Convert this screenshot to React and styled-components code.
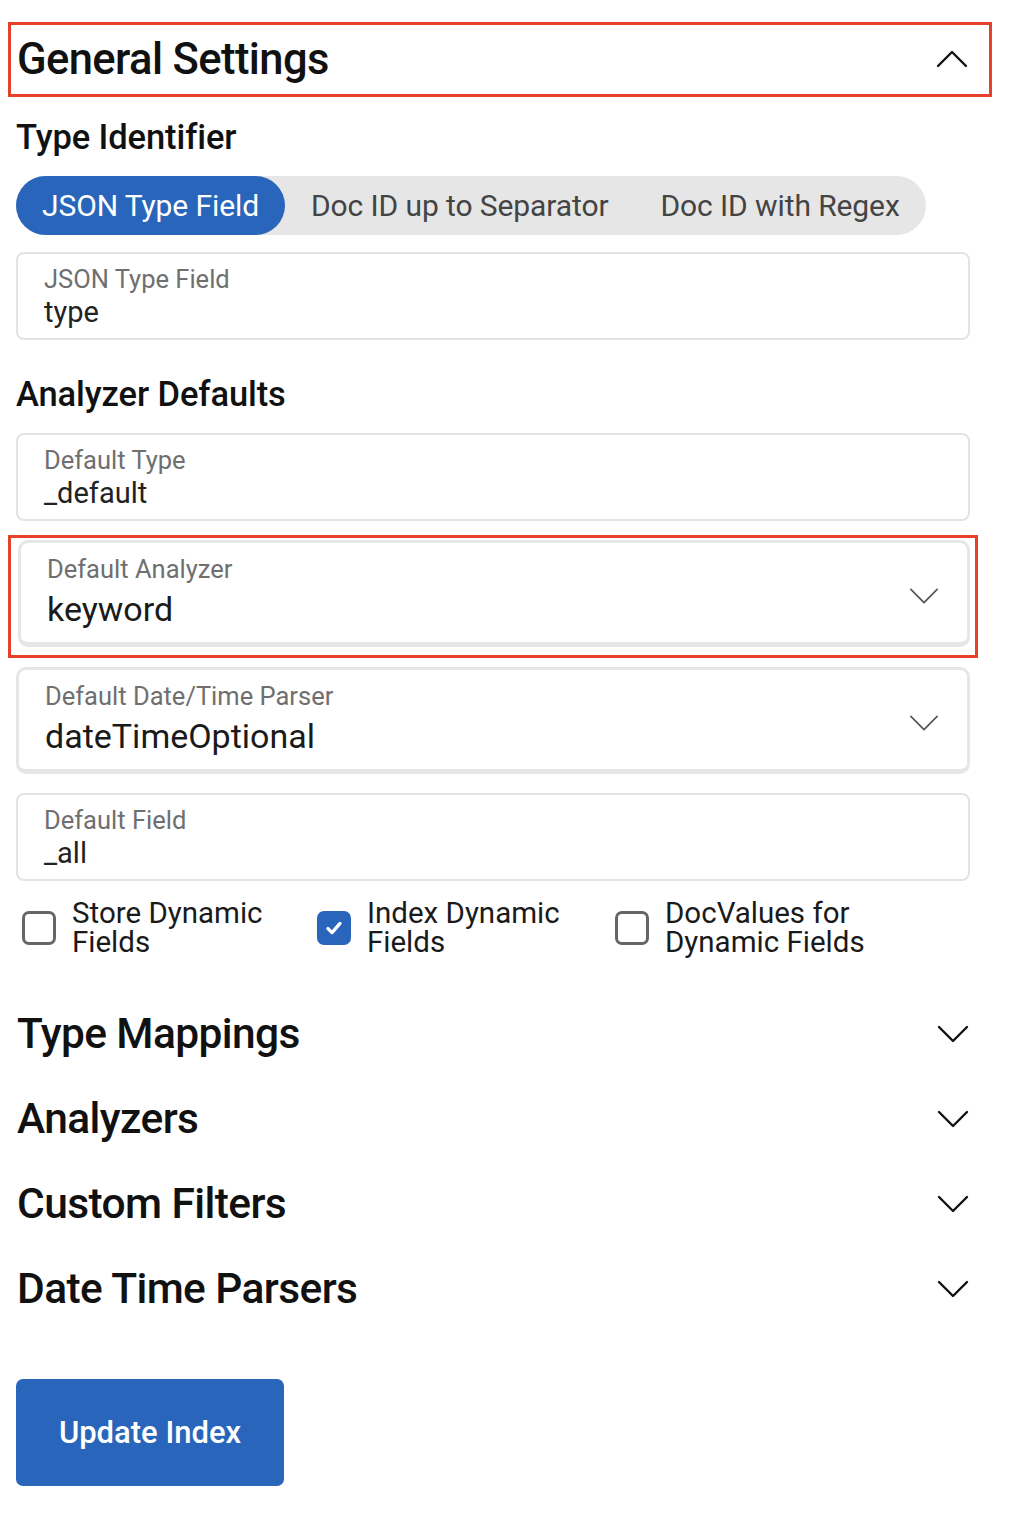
import styled, { createGlobalStyle } from 'styled-components';

const GlobalStyle = createGlobalStyle`
  body {
    margin: 0;
    background: #ffffff;
    font-family: Roboto, "Noto Sans", sans-serif;
    color: #111111;
  }
`;

const Chevron = ({ up = false, size = 32, color = '#111', stroke = 2.4 }) => (
  <svg width={size} height={size} viewBox="0 0 32 32" fill="none">
    <path
      d={up ? 'M2 22 L16 8 L30 22' : 'M2 9 L16 23 L30 9'}
      stroke={color}
      strokeWidth={stroke}
      strokeLinecap="round"
      strokeLinejoin="round"
    />
  </svg>
);

const App = () => {
  const segments = ['JSON Type Field', 'Doc ID up to Separator', 'Doc ID with Regex'];
  const checks = [
    { label: 'Store Dynamic Fields', checked: false },
    { label: 'Index Dynamic Fields', checked: true },
    { label: 'DocValues for Dynamic Fields', checked: false },
  ];
  const sections = ['Type Mappings', 'Analyzers', 'Custom Filters', 'Date Time Parsers'];

  return (
    <>
      <GlobalStyle />
      <Page>
        <SectionHeader $highlight>
          <h2>General Settings</h2>
          <Chevron up />
        </SectionHeader>

        <SubHeading>Type Identifier</SubHeading>
        <Segmented>
          {segments.map((s, i) => (
            <Segment key={s} $active={i === 0}>
              {s}
            </Segment>
          ))}
        </Segmented>

        <TextField>
          <label>JSON Type Field</label>
          <span>type</span>
        </TextField>

        <SubHeading $top={22}>Analyzer Defaults</SubHeading>
        <TextField>
          <label>Default Type</label>
          <span>_default</span>
        </TextField>

        <Highlight>
          <Select>
            <div>
              <label>Default Analyzer</label>
              <span>keyword</span>
            </div>
            <SelectIcon>
              <Chevron size={30} color="#555" stroke={1.8} />
            </SelectIcon>
          </Select>
        </Highlight>

        <Select $top={9}>
          <div>
            <label>Default Date/Time Parser</label>
            <span>dateTimeOptional</span>
          </div>
          <SelectIcon>
            <Chevron size={30} color="#555" stroke={1.8} />
          </SelectIcon>
        </Select>

        <TextField>
          <label>Default Field</label>
          <span>_all</span>
        </TextField>

        <CheckRow>
          {checks.map((c) => (
            <CheckItem key={c.label}>
              <Box $checked={c.checked}>
                {c.checked && (
                  <svg width="22" height="22" viewBox="0 0 20 20" fill="none">
                    <path
                      d="M4.5 10.5 L8.2 14.2 L15.5 5.8"
                      stroke="#fff"
                      strokeWidth="3"
                      strokeLinecap="round"
                      strokeLinejoin="round"
                    />
                  </svg>
                )}
              </Box>
              <span>{c.label}</span>
            </CheckItem>
          ))}
        </CheckRow>

        <Sections>
          {sections.map((s) => (
            <SectionHeader key={s}>
              <h2>{s}</h2>
              <Chevron />
            </SectionHeader>
          ))}
        </Sections>

        <PrimaryButton>Update Index</PrimaryButton>
      </Page>
    </>
  );
};

export default App;

const Page = styled.div`
  display: flex;
  flex-direction: column;
  width: 954px;
  padding: 22px 0 30px 16px;
`;

const SectionHeader = styled.div`
  display: flex;
  align-items: center;
  justify-content: space-between;
  box-sizing: border-box;
  height: ${({ $highlight }) => ($highlight ? '75px' : '85px')};
  width: ${({ $highlight }) => ($highlight ? '984px' : '970px')};
  margin-left: ${({ $highlight }) => ($highlight ? '-8px' : '0')};
  border: ${({ $highlight }) => ($highlight ? '3px solid #e8412b' : 'none')};
  padding: ${({ $highlight }) => ($highlight ? '0 21px 0 6px' : '0 17px 0 1px')};

  h2 {
    margin: 0;
    font-size: ${({ $highlight }) => ($highlight ? '43.5px' : '42.5px')};
    font-weight: 500;
    letter-spacing: -0.6px;
    color: #111;
  }
`;

const SubHeading = styled.h3`
  margin: ${({ $top }) => $top ?? 20}px 0 19px 0;
  font-size: 34.5px;
  font-weight: 500;
  letter-spacing: -0.1px;
  line-height: 40px;
  color: #111;
`;

const Segmented = styled.div`
  display: flex;
  align-self: flex-start;
  height: 59px;
  border-radius: 30px;
  background: #e6e6e6;
  margin-bottom: 17px;
`;

const Segment = styled.div`
  display: flex;
  align-items: center;
  padding: 0 26px;
  border-radius: 30px;
  font-size: 30px;
  letter-spacing: -0.1px;
  background: ${({ $active }) => ($active ? '#2966bb' : 'transparent')};
  color: ${({ $active }) => ($active ? '#ffffff' : '#444444')};
`;

const TextField = styled.div`
  display: flex;
  flex-direction: column;
  justify-content: center;
  box-sizing: border-box;
  height: 88px;
  border: 2px solid #e3e3e3;
  border-radius: 8px;
  padding: 0 26px;
  margin-bottom: 12px;

  label {
    font-size: 25.5px;
    color: #6f6f6f;
    line-height: 32px;
  }

  span {
    font-size: 29px;
    color: #222;
    line-height: 34px;
  }
`;

const Highlight = styled.div`
  width: 970px;
  margin: 2px 0 0 -8px;
  box-sizing: border-box;
  border: 3px solid #e8412b;
  padding: 2px 5px 8px 7px;
`;

const Select = styled.div`
  display: flex;
  align-items: center;
  justify-content: space-between;
  box-sizing: border-box;
  height: 107px;
  margin: ${({ $top }) => $top ?? 0}px 0 ${({ $top }) => ($top ? 19 : 0)}px;
  border: 3px solid #e6e6e6;
  border-bottom-width: 5px;
  border-radius: 10px;
  padding: 0 28px 2px 26px;

  div {
    display: flex;
    flex-direction: column;
  }

  label {
    font-size: 25.5px;
    color: #6f6f6f;
    line-height: 34px;
  }

  span {
    font-size: 34px;
    color: #1a1a1a;
    line-height: 46px;
  }
`;

const SelectIcon = styled.span`
  display: flex;
  margin-top: 8px;
`;

const CheckRow = styled.div`
  display: grid;
  grid-template-columns: 295px 298px 300px;
  margin: 6px 0 0 6px;
`;

const CheckItem = styled.div`
  display: flex;
  align-items: center;
  gap: 16px;

  span {
    font-size: 29.5px;
    line-height: 29px;
    color: #1a1a1a;
    max-width: 225px;
  }
`;

const Box = styled.div`
  flex: none;
  display: flex;
  align-items: center;
  justify-content: center;
  box-sizing: border-box;
  width: 34px;
  height: 34px;
  border-radius: 7px;
  border: 3px solid ${({ $checked }) => ($checked ? '#2966bb' : '#666666')};
  background: ${({ $checked }) => ($checked ? '#2966bb' : 'transparent')};
`;

const Sections = styled.div`
  display: flex;
  flex-direction: column;
  margin-top: 34px;
`;

const PrimaryButton = styled.button`
  align-self: flex-start;
  margin-top: 48px;
  width: 268px;
  height: 107px;
  border: none;
  border-radius: 7px;
  background: #2966bb;
  color: #ffffff;
  font-family: Roboto, "Noto Sans", sans-serif;
  font-size: 31px;
  font-weight: 500;
`;
